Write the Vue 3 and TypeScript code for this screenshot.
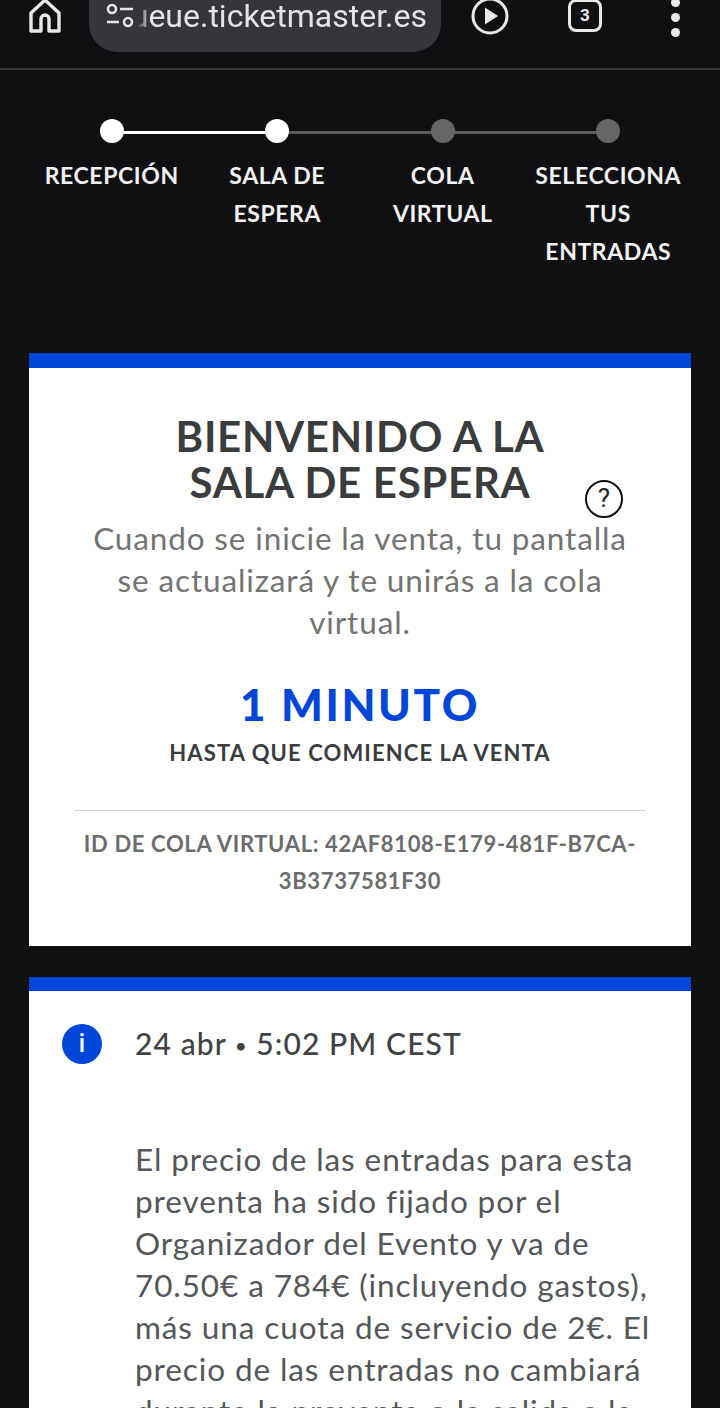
<script setup lang="ts">
interface Step {
  label: string
  done: boolean
}

const steps: Step[] = [
  { label: 'RECEPCIÓN', done: true },
  { label: 'SALA DE ESPERA', done: true },
  { label: 'COLA VIRTUAL', done: false },
  { label: 'SELECCIONA TUS ENTRADAS', done: false }
]
</script>

<template>
  <div class="page">
    <header class="browser-bar">
      <svg class="home" width="34" height="36" viewBox="0 0 34 36" fill="none" stroke="#e8e8e8" stroke-width="3.4" stroke-linejoin="round">
        <path d="M3 15 17 2l14 13v18H21V21a4 4 0 0 0-8 0v12H3z" />
      </svg>
      <div class="url">
        <svg width="30" height="28" viewBox="0 0 30 28" fill="none" stroke="#e4e4e4" stroke-width="2.6">
          <circle cx="7" cy="7" r="4" />
          <path d="M15 7h13M2 20h12" />
          <circle cx="23" cy="20" r="4" />
        </svg>
        <div class="url-text"><span>queue.ticketmaster.es</span></div>
      </div>
      <svg class="play" width="38" height="38" viewBox="0 0 38 38">
        <circle cx="19" cy="19" r="17" fill="none" stroke="#e8e8e8" stroke-width="3" />
        <path d="M14 10.5 27 19l-13 8.5z" fill="#e8e8e8" />
      </svg>
      <div class="tabs">3</div>
      <div class="dots"><i></i><i></i><i></i></div>
    </header>

    <main class="content">
      <ol class="steps">
        <li v-for="(step, i) in steps" :key="step.label" class="step" :class="{ done: step.done, 'line-on': steps[i + 1]?.done }">
          <span class="dot"></span>
          <span class="label">{{ step.label }}</span>
        </li>
      </ol>

      <section class="card welcome">
        <h1>BIENVENIDO A LA<br />SALA DE ESPERA</h1>
        <span class="help">?</span>
        <p class="intro">Cuando se inicie la venta, tu pantalla<br />se actualizará y te unirás a la cola<br />virtual.</p>
        <div class="count">1 MINUTO</div>
        <div class="until">HASTA QUE COMIENCE LA VENTA</div>
        <div class="queue-id">ID DE COLA VIRTUAL: 42AF8108-E179-481F-B7CA-<br />3B3737581F30</div>
      </section>

      <section class="card notice">
        <div class="info"><span>i</span></div>
        <div class="notice-body">
          <div class="date">24 abr <span class="sep">•</span> 5:02 PM CEST</div>
          <p>El precio de las entradas para esta<br />preventa ha sido fijado por el<br />Organizador del Evento y va de<br />70.50€ a 784€ (incluyendo gastos),<br />más una cuota de servicio de 2€. El<br />precio de las entradas no cambiará<br />durante la preventa o la salida a la</p>
        </div>
      </section>
    </main>
  </div>
</template>

<style scoped>
.page {
  height: 1408px;
  overflow: hidden;
  background: #101012;
  font-family: Lato, "Open Sans", sans-serif;
}
.browser-bar {
  height: 70px;
  box-sizing: border-box;
  border-bottom: 2px solid #3a3a3c;
  display: flex;
  align-items: flex-start;
  position: relative;
}
.home {
  margin: -2px 0 0 28px;
}
.url {
  width: 352px;
  height: 52px;
  margin: 0 0 0 27px;
  padding-left: 16px;
  box-sizing: border-box;
  background: #35353b;
  border-radius: 0 0 28px 28px;
  display: flex;
  align-items: flex-start;
  color: #e4e4e6;
}
.url svg {
  margin-top: 2px;
  flex: none;
}
.url-text {
  width: 292px;
  height: 36px;
  overflow: hidden;
  direction: rtl;
  font: 32px/32px Roboto, sans-serif;
  -webkit-mask-image: linear-gradient(90deg, transparent 2px, #000 15px);
  mask-image: linear-gradient(90deg, transparent 2px, #000 15px);
}
.url-text span {
  direction: ltr;
  unicode-bidi: bidi-override;
  white-space: nowrap;
}
.play {
  margin: -3px 0 0 30px;
}
.tabs {
  width: 34px;
  height: 33px;
  box-sizing: border-box;
  margin: -1px 0 0 59px;
  border: 3px solid #e8e8e8;
  border-radius: 8px;
  color: #e8e8e8;
  font: 700 17px/27px Roboto, sans-serif;
  text-align: center;
}
.dots {
  margin: -2px 0 0 69px;
  display: flex;
  flex-direction: column;
  gap: 6px;
}
.dots i {
  width: 9px;
  height: 9px;
  border-radius: 50%;
  background: #e8e8e8;
}
.content {
  padding: 0 29px;
}
.steps {
  list-style: none;
  margin: 0;
  padding: 49px 0 0;
  display: grid;
  grid-template-columns: repeat(4, 1fr);
  box-sizing: border-box;
  height: 283px;
}
.step {
  position: relative;
  display: flex;
  flex-direction: column;
  align-items: center;
  text-align: center;
}
.step:not(:last-child)::after {
  content: "";
  position: absolute;
  top: 12px;
  left: 50%;
  width: 100%;
  height: 3px;
  background: #5c5c5c;
}
.step.line-on::after {
  background: #fff;
}
.dot {
  width: 24px;
  height: 24px;
  border-radius: 50%;
  background: #666;
  position: relative;
  z-index: 1;
}
.step.done .dot {
  background: #fff;
}
.label {
  width: 150px;
  margin-top: 13px;
  color: #f2f2f2;
  font-size: 23px;
  line-height: 38px;
  font-weight: 700;
  letter-spacing: 0.6px;
}
.card {
  background: #fff;
  border-top: 15px solid #0046d8;
}
.welcome {
  height: 593px;
  box-sizing: border-box;
  padding: 45px 45px 0;
  text-align: center;
  position: relative;
}
h1 {
  margin: 0;
  color: #3a3c3e;
  font-size: 42px;
  line-height: 46px;
  font-weight: 700;
  letter-spacing: 0.7px;
}
.help {
  position: absolute;
  left: 556px;
  top: 112px;
  width: 38px;
  height: 38px;
  box-sizing: border-box;
  border: 2.5px solid #111;
  border-radius: 50%;
  color: #222;
  font: 26px/33px Roboto, sans-serif;
}
.intro {
  margin: 12px 0 0;
  color: #737373;
  font-size: 31.5px;
  line-height: 42px;
  letter-spacing: 0.86px;
  white-space: nowrap;
}
.count {
  margin-top: 35px;
  color: #0046d8;
  font-size: 44px;
  line-height: 52px;
  font-weight: 900;
  letter-spacing: 2.6px;
}
.until {
  margin-top: 8px;
  color: #3a3c3e;
  font-size: 22px;
  line-height: 30px;
  font-weight: 700;
  letter-spacing: 1.1px;
}
.queue-id {
  margin-top: 42px;
  padding-top: 14px;
  border-top: 1px solid #d6d6d6;
  color: #6c6c6c;
  font-size: 22px;
  line-height: 37px;
  font-weight: 700;
  letter-spacing: 0.65px;
  white-space: nowrap;
}
.notice {
  margin-top: 31px;
  height: 460px;
  display: flex;
  padding: 33px 0 0 33px;
  gap: 33px;
  border-top-width: 14px;
}
.info {
  flex: none;
  width: 40px;
  height: 40px;
  border-radius: 50%;
  background: #0046d8;
  color: #fff;
  text-align: center;
  font: 500 25px/40px Roboto, sans-serif;
}
.date {
  color: #404244;
  font-size: 30px;
  line-height: 38px;
  font-weight: 500;
  letter-spacing: 1.1px;
}
.sep {
  font-size: 20px;
  vertical-align: 2px;
}
.notice p {
  margin: 74px 0 0;
  color: #54565a;
  font-size: 31.5px;
  line-height: 42px;
  letter-spacing: 0.9px;
  white-space: nowrap;
}
</style>

<style>
html,
body {
  margin: 0;
  background: #101012;
}
</style>
